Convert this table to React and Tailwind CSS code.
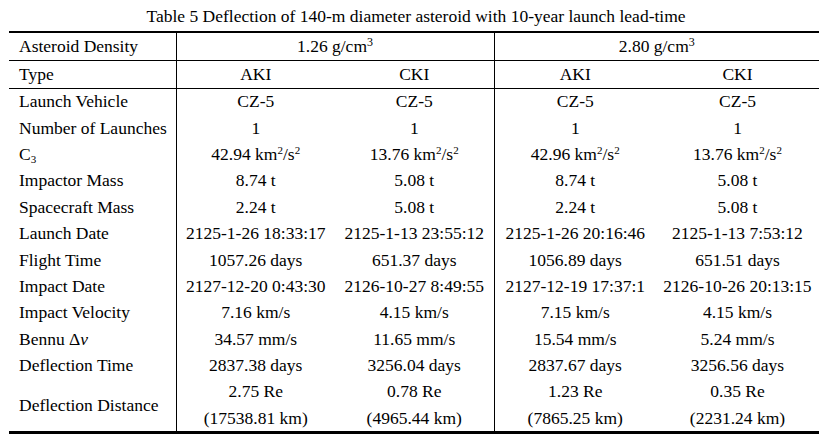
import React from "react";

const sq = <sup className="text-[11px]">2</sup>;

function C3Val({ v }) {
  return (
    <span>
      {v} km{sq}/s{sq}
    </span>
  );
}

const rows = [
  ["Launch Vehicle", "CZ-5", "CZ-5", "CZ-5", "CZ-5"],
  ["Number of Launches", "1", "1", "1", "1"],
  [
    <span>
      C<sub className="text-[11px]">3</sub>
    </span>,
    <C3Val v="42.94" />,
    <C3Val v="13.76" />,
    <C3Val v="42.96" />,
    <C3Val v="13.76" />,
  ],
  ["Impactor Mass", "8.74 t", "5.08 t", "8.74 t", "5.08 t"],
  ["Spacecraft Mass", "2.24 t", "5.08 t", "2.24 t", "5.08 t"],
  ["Launch Date", "2125-1-26 18:33:17", "2125-1-13 23:55:12", "2125-1-26 20:16:46", "2125-1-13 7:53:12"],
  ["Flight Time", "1057.26 days", "651.37 days", "1056.89 days", "651.51 days"],
  ["Impact Date", "2127-12-20 0:43:30", "2126-10-27 8:49:55", "2127-12-19 17:37:1", "2126-10-26 20:13:15"],
  ["Impact Velocity", "7.16 km/s", "4.15 km/s", "7.15 km/s", "4.15 km/s"],
  [
    <span>
      Bennu Δ<i>v</i>
    </span>,
    "34.57 mm/s",
    "11.65 mm/s",
    "15.54 mm/s",
    "5.24 mm/s",
  ],
  ["Deflection Time", "2837.38 days", "3256.04 days", "2837.67 days", "3256.56 days"],
];

const distance = [
  ["2.75 Re", "(17538.81 km)"],
  ["0.78 Re", "(4965.44 km)"],
  ["1.23 Re", "(7865.25 km)"],
  ["0.35 Re", "(2231.24 km)"],
];

function Cell({ children, divider }) {
  return (
    <td className={"text-center p-0 whitespace-nowrap " + (divider ? "border-r border-black" : "")}>
      {children}
    </td>
  );
}

export default function App() {
  return (
    <div
      className="w-[832px] h-[438px] bg-white text-black pt-[6px]"
      style={{ fontFamily: '"Liberation Serif", "Times New Roman", serif' }}
    >
      {/* Caption */}
      <div className="text-center text-[17.5px] leading-[21px] mb-[4px]">
        Table 5 Deflection of 140-m diameter asteroid with 10-year launch lead-time
      </div>

      <table className="ml-[9px] w-[810px] table-fixed border-collapse border-t-2 border-b-[3px] border-black text-[17.5px]">
        <colgroup>
          <col className="w-[167px]" />
          <col className="w-[159px]" />
          <col className="w-[159px]" />
          <col className="w-[162px]" />
          <col className="w-[163px]" />
        </colgroup>
        <tbody>
          <tr className="h-[28px] border-b border-black leading-[20px]">
            <td className="pl-[10px] p-0 border-r border-black">Asteroid Density</td>
            <td colSpan={2} className="text-center p-0 border-r border-black">
              1.26 g/cm<sup className="text-[12px]">3</sup>
            </td>
            <td colSpan={2} className="text-center p-0">
              2.80 g/cm<sup className="text-[12px]">3</sup>
            </td>
          </tr>
          <tr className="h-[28px] border-b border-black leading-[20px]">
            <td className="pl-[10px] p-0 border-r border-black">Type</td>
            <Cell>AKI</Cell>
            <Cell divider>CKI</Cell>
            <Cell>AKI</Cell>
            <Cell>CKI</Cell>
          </tr>

          {rows.map((r, i) => (
            <tr key={i} className="h-[26.4px] leading-[20px]">
              <td className="pl-[10px] p-0 border-r border-black whitespace-nowrap">{r[0]}</td>
              <Cell>{r[1]}</Cell>
              <Cell divider>{r[2]}</Cell>
              <Cell>{r[3]}</Cell>
              <Cell>{r[4]}</Cell>
            </tr>
          ))}

          <tr className="leading-[26.4px]">
            <td className="pl-[10px] p-0 border-r border-black whitespace-nowrap">Deflection Distance</td>
            {distance.map((d, i) => (
              <Cell key={i} divider={i === 1}>
                <div>{d[0]}</div>
                <div>{d[1]}</div>
              </Cell>
            ))}
          </tr>
        </tbody>
      </table>
    </div>
  );
}
